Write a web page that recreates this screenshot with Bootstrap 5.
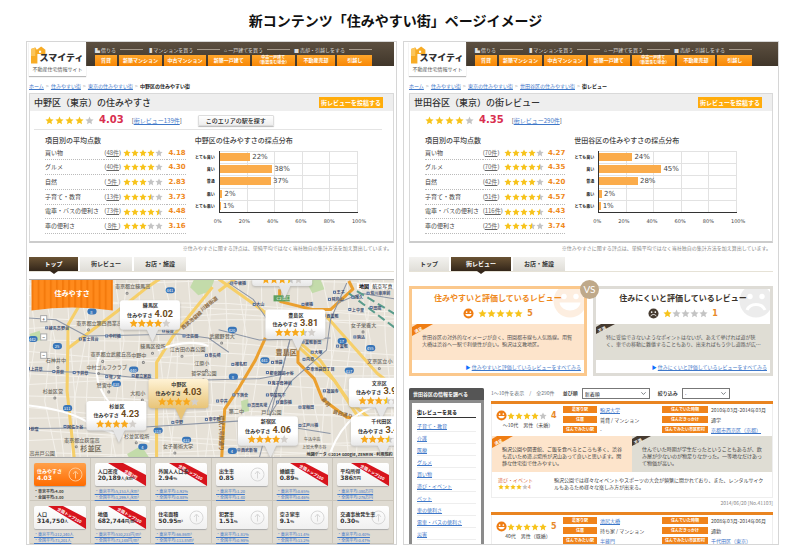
<!DOCTYPE html>
<html lang="ja">
<head>
<meta charset="utf-8">
<meta name="viewport" content="width=device-width, initial-scale=1">
<title>新コンテンツ「住みやすい街」ページイメージ</title>
<link href="https://cdn.jsdelivr.net/npm/bootstrap@5.3.0/dist/css/bootstrap.min.css" rel="stylesheet">
<style>
:root{--jp:"Noto Sans CJK JP",sans-serif;--num:"DejaVu Sans","Noto Sans CJK JP",sans-serif;--orange:#ef8a1d;--lnk:#3f78c9}
body{font:5px/7px var(--jp);color:#444;background:#fff;height:100vh;min-height:300px;padding:0 25px 12px 26px}
a{color:var(--lnk)}
h1{font-size:14px;line-height:20px;font-weight:700;color:#111;margin:10px 0 11px;padding-right:14px}
h2,h3,h4,p,ul{margin:0}
svg{display:block;flex:none}
.pages{display:grid;grid-template-columns:371fr 376fr;gap:6px;min-height:0}
.shot{border:1px solid #d6d6d6;overflow:hidden;padding:0 2px 0 2px;min-height:0}
.shot.rv{padding:0 5px}
.top-bar{height:34px;background:linear-gradient(#5c4f40,#40362a 24px,#fff 24px)}
.rv .top-bar{margin-right:-5px}
.brand-box{width:57px;background:#fff;box-shadow:0 1px 1px #bbb;color:#555;text-align:center}
.logo-word{font-size:9px;line-height:10px;font-weight:900;margin:7px 0 0 -8px;color:#333}
.gnav{height:24px;padding:2px 0 1px 9px;max-width:286px}
.gnav-cap{color:#ddd;height:11px;line-height:10px}
.gnav-cap i{height:1px;background:#a59a8c;flex:1}
.gnav-row{display:grid;grid-template-columns:21fr 41fr 40fr 40fr 41fr 37fr 33fr;gap:2px}
.gnav-btn{background:linear-gradient(#ffa62b,#f88705);color:#fff;font-weight:700;height:11px;line-height:10px;text-decoration:none;text-align:center;white-space:nowrap}
.gnav-btn.two{font-size:4px;line-height:5px}
.gnav-btn:hover{color:#fff}
.crumbs{padding:6px 0 4px;white-space:nowrap}
.crumbs span{color:#999;margin:0 1px}
.crumbs b{color:#222}
.summary{border:1px solid #d9d9d9;border-bottom:2px solid #ccc}
.sum-title{background:#eee;height:17px;padding:0 10px 0 4px}
.sum-title h2{font-size:9px;line-height:16px;font-weight:500;color:#333}
.post-btn{background:#ffac0c;color:#fff;border:0;font-size:6px;line-height:11px;font-weight:700;padding:0 2px}
.rate-row{height:19px;margin:0 11px 0 4px;padding-left:11px;border-bottom:1px solid #e4e4e4;font-size:6px}
.rv .rate-row{border-color:transparent}
.big-num{font:bold 10px/12px var(--num);color:#d92f4f}
.area-btn{border:1px solid #ddd;border-radius:1px;background:linear-gradient(#fff,#eee);box-shadow:0 1px 1px #bbb;font-size:6px;line-height:9px;padding:0 7px;color:#222;font-weight:500}
.sum-grid{display:grid;grid-template-columns:142fr 189fr;gap:9px;padding:4px 11px 7px 15px}
.sum-grid h3{font-size:7px;line-height:12px;font-weight:500;white-space:nowrap}
.scores{width:100%;height:88px;font-size:6px;line-height:8px;white-space:nowrap}
.scores td,.scores th{padding:0;border-bottom:1px dotted #bbb;vertical-align:middle;font-weight:400}
.scores a{color:#666}
.scores .val{font:bold 7px/8px var(--num);color:var(--orange);text-align:right}
.bars{display:grid;grid-template-columns:24px 141fr 24fr;margin-top:5px}
.bars-l{display:grid;grid-template-rows:repeat(5,1fr);font-size:4px;font-weight:700;text-align:right;padding-right:4px;align-items:center;white-space:nowrap;color:#222}
.bars-p{display:grid;grid-template-rows:repeat(5,1fr);height:62px;border-left:1px solid #333;border-bottom:1px solid #333;background:repeating-linear-gradient(90deg,transparent 0 calc(20% - 1px),#e2e2e2 calc(20% - 1px) 20%),repeating-linear-gradient(#e2e2e2 0 1px,transparent 1px 20%)}
.bars-p div{display:flex;align-items:center;gap:2px;font:7px/8px var(--num);color:#444}
.bars-p i{height:8px;background:#fbac4b}
.ticks{grid-column:2;display:flex;justify-content:space-between;font:5px/8px var(--num);margin:4px -8px 0 -5px}
.note{text-align:right;color:#888;line-height:10px;padding-right:2px;white-space:nowrap}
.tabs{height:15px;margin-top:4px;border-bottom:1px solid #e6e2d6;gap:2px}
.tabs a{width:52px;height:14px;line-height:13px;font-size:6px;font-weight:700;text-align:center;text-decoration:none;color:#333;background:linear-gradient(#f3f2ef,#e0ded8)}
.tabs a:first-child{width:49px}
.rv .tabs a:first-child{width:40px}
.rv .tabs a:nth-child(2){width:60px}
.tabs .on{color:#fff;background:linear-gradient(#6a5334,#33261a);position:relative}
.tabs .on::after{content:"";position:absolute;left:calc(50% - 4px);top:14px;border:4px solid transparent;border-top:3px solid #33261a;border-bottom:0}
.map{margin-top:7px;flex:1 1 0;min-height:0}
.map svg{width:100%;height:100%}
.stats{display:grid;grid-template-columns:repeat(6,1fr);background:#dfdbd2;padding-left:1px}
.cell{padding:5px 4px 0 4px;height:43px;border-right:1px solid #cbc6bb;border-bottom:1px solid #cbc6bb;white-space:nowrap;font-size:4px;line-height:6px}
.tile{height:23px;background:linear-gradient(#fff,#f0f0f0);border-radius:2px;box-shadow:0 1px 1px #aaa;position:relative;padding:4px 0 0 3px;font-weight:700;font-size:5px;line-height:7px;color:#333;margin-bottom:2px}
.tile b{font:bold 6px/7px var(--num)}
.tile small{font-size:4px}
.tile svg{position:absolute;right:0;top:0}
.tile svg.arr{right:3px;top:4px}
.tile.hot{background:linear-gradient(#ffa04a,#ff6c00);color:#fff}
.versus{display:grid;grid-template-columns:178fr 180fr;gap:6px;margin:14px 0 12px;position:relative}
.vs{position:absolute;left:calc(50% - 11px);top:-6px;width:19px;height:19px;border-radius:50%;background:#bfa98a;color:#fff;font:10px/19px Lato,sans-serif;text-align:center}
.op{border:3px solid #fbc88c;color:#555;min-width:0}
.op.bad{border-color:#dedcd6}
.op-head{height:35px;position:relative;overflow:hidden}
.op-head h3{font-size:8px;line-height:12px;font-weight:700;color:var(--orange);text-align:center;padding-top:3px;position:relative;white-space:nowrap}
.bad .op-head h3{color:#3b332a}
.ghost{position:absolute;right:-4px;top:-6px}
.five{font:bold 8px/10px var(--num);color:#e8892a}
.op-text{background:#fde4cb;height:36px;padding:9px 9px 0 10px;position:relative}
.bad .op-text,.pm .minus{background:#dfddd4}
.flag{position:absolute;left:0;top:0}
.op-foot{text-align:right;line-height:13px;padding-right:3px;height:13px}
.side{width:75px;background:#8b8b8b;border-radius:2px 2px 0 0;flex:none;padding:0 3px}
.side h3{background:#555;color:#fff;font-size:5px;line-height:12px;font-weight:700;margin:0 -3px 3px;padding-left:4px;border-radius:2px 2px 0 0}
.side-in{background:#fff;padding:4px 5px 300px}
.side-in h4{font-size:5px;line-height:10px;font-weight:700;color:#111;border-bottom:1px solid #333;margin-bottom:2px}
.side-in li{height:12px;line-height:11px;border-bottom:1px solid #eee}
.rev-list{min-width:0;padding-left:7px}
.list-tools{height:13px;line-height:10px;white-space:nowrap}
.list-tools .form-select{font:5px/8px var(--jp);height:11px;padding:0 8px 0 2px;border:1px solid #777;border-radius:0;background-size:5px;background-position:right 3px center}
.list-tools .sel-sort{width:68px}
.list-tools .sel-narrow{width:48px}
.rev{border-top:3px solid #e98420;margin-bottom:1px}
.rev-box{border:1px solid #eee;border-top:0}
.rev-top{display:grid;grid-template-columns:64px 34px 59fr 46px 61fr;column-gap:3px;padding:2px 0 0 4px;height:32px}
.rev-top .who{grid-row:1/4}
.rev-top>*{white-space:nowrap;min-width:0}
.tag{background:#f0831a;color:#fff;font-weight:700;font-size:4px;text-align:center;line-height:7px;height:7px}
.pm{display:grid;grid-template-columns:1fr 1fr}
.pm>div{background:#fde4cb;height:36px;padding:9px 8px 0 10px;position:relative}
.extra{display:grid;grid-template-columns:53px 1fr;gap:3px;padding:4px 8px 7px 6px}
.theme{color:#dd6b3c}
.date{text-align:right;color:#888;line-height:10px}
</style>
</head>
<body class="d-flex flex-column">
<svg width="0" height="0" class="position-absolute" aria-hidden="true">
<defs>
<linearGradient id="half"><stop offset=".5" stop-color="#f7c31a"/><stop offset=".5" stop-color="#c4c4c4"/></linearGradient>
<linearGradient id="tan" x2="0" y2="1"><stop offset="0" stop-color="#fff3d6"/><stop offset="1" stop-color="#e8c478"/></linearGradient>
<linearGradient id="wht" x2="0" y2="1"><stop offset=".6" stop-color="#fff"/><stop offset="1" stop-color="#e6e6e6"/></linearGradient>
<symbol id="star" viewBox="0 0 20 20"><path d="M10 1l2.700 6 6.300.700-4.700 4.300 1.300 6.500L10 15.200 4.400 18.500l1.300-6.500L1 7.700 7.300 7z"/></symbol>
<symbol id="smile" viewBox="0 0 24 24"><circle cx="12" cy="12" r="11"/><circle cx="8" cy="9" r="1.800" fill="#fff"/><circle cx="16" cy="9" r="1.800" fill="#fff"/><path d="M5 13h14c-1 7-13 7-14 0z" fill="#fff"/></symbol>
<symbol id="frown" viewBox="0 0 24 24"><circle cx="12" cy="12" r="11"/><circle cx="8" cy="9" r="1.800" fill="#fff"/><circle cx="16" cy="9" r="1.800" fill="#fff"/><path d="M6 18c2-5 10-5 12 0" fill="none" stroke="#fff" stroke-width="2"/></symbol>
<symbol id="logo" viewBox="0 0 30 34"><path d="M0 5l8-3 3 4 8-6 8 6v8H12v18H0z" fill="#f8ac25"/><path d="M0 5l8-3v16H0z" fill="#fbc65c"/><path d="M15 8h4v4h-4z" fill="#fff"/></symbol>
<pattern id="stripe" width="6" height="8" patternUnits="userSpaceOnUse"><path d="M0 0h6v8H0z" fill="#ff8a1c"/><path d="M0 0h2v8H0z" fill="#f47a0c"/></pattern>
</defs>
</svg>

<h1 class="text-center">新コンテンツ「住みやすい街」ページイメージ</h1>
<main class="pages flex-fill">
  <section class="shot d-flex flex-column">
    <div data-part="header"></div>
    <nav class="crumbs" aria-label="パンくず"><a href="#">ホーム</a> <span>&gt;</span> <a href="#">住みやすい街</a> <span>&gt;</span> <a href="#">東京の住みやすい街</a> <span>&gt;</span> <b>中野区の住みやすい街</b></nav>
    <div data-part="summary" data-key="nakano"></div>
    <nav class="tabs d-flex"><a class="on" href="#">トップ</a><a href="#">街レビュー</a><a href="#">お店・施設</a></nav>
    <div class="map"></div>
    <div class="stats"></div>
  </section>

  <section class="shot rv">
    <div data-part="header"></div>
    <nav class="crumbs" aria-label="パンくず"><a href="#">ホーム</a> <span>&gt;</span> <a href="#">住みやすい街</a> <span>&gt;</span> <a href="#">東京の住みやすい街</a> <span>&gt;</span> <a href="#">世田谷区の住みやすい街</a> <span>&gt;</span> <b>街レビュー</b></nav>
    <div data-part="summary" data-key="setagaya"></div>
    <nav class="tabs d-flex"><a href="#">トップ</a><a class="on" href="#">街レビュー</a><a href="#">お店・施設</a></nav>

    <div class="versus">
      <article class="op">
        <div class="op-head"><svg class="ghost" width="36" height="36" fill="#fdeee0"><use href="#smile"/></svg><h3>住みやすいと評価しているレビュー</h3>
          <div class="d-flex justify-content-center align-items-center gap-1 position-relative mt-1"><svg width="11" height="11" fill="#ef7d13"><use href="#smile"/></svg><span data-stars="5" data-size="9"></span><span class="five">5</span></div></div>
        <div class="op-text"><svg class="flag" width="22" height="12"><path d="M0 12V3L5 0h16z" fill="#ef7d13"/><text x="3" y="9" transform="rotate(-27 4 8)" font-size="4" font-weight="700" fill="#fff">満足</text></svg>世田谷区の対外的なイメージが良く、田園都市線も人気路線。用賀大橋は渋谷へ一駅で利便性が良い。駒沢は文教地区。</div>
        <div class="op-foot"><span class="text-primary">▶</span> <a href="#">住みやすいと評価しているレビューをすべてみる</a></div>
      </article>
      <article class="op bad">
        <div class="op-head"><svg class="ghost" width="36" height="36" fill="#ececec"><use href="#frown"/></svg><h3>住みにくいと評価しているレビュー</h3>
          <div class="d-flex justify-content-center align-items-center gap-1 position-relative mt-1"><svg width="11" height="11" fill="#463b30"><use href="#frown"/></svg><span data-stars="1" data-size="9"></span><span class="five">1</span></div></div>
        <div class="op-text"><svg class="flag" width="20" height="12"><path d="M0 10V3L5 0h14z" fill="#463b30"/><text x="3" y="8" transform="rotate(-27 4 8)" font-size="4" font-weight="700" fill="#fff">不満</text></svg>特に妥協できないようなポイントはないが、あえて挙げれば道が狭く、車での移動に難儀することもあり、出来ればもう少し道路が広…</div>
        <div class="op-foot"><span class="text-primary">▶</span> <a href="#">住みにくいと評価しているレビューをすべてみる</a></div>
      </article>
      <div class="vs">VS</div>
    </div>

    <div class="d-flex">
      <aside class="side"><h3>世田谷区の情報を調べる</h3><div class="side-in"><h4>街レビューを見る</h4>
        <ul class="list-unstyled"><li><a href="#">子育て・教育</a></li><li><a href="#">介護</a></li><li><a href="#">医療</a></li><li><a href="#">グルメ</a></li><li><a href="#">買い物</a></li><li><a href="#">遊び・イベント</a></li><li><a href="#">ペット</a></li><li><a href="#">車の便利さ</a></li><li><a href="#">電車・バスの便利さ</a></li><li><a href="#">災害</a></li><li><a href="#">治安</a></li></ul></div></aside>
      <div class="flex-fill rev-list">
        <div class="list-tools d-flex align-items-start"><span class="text-secondary me-1">1〜10件を表示　/　全290件</span>
          <label class="fw-bold mx-1" for="sort">並び順</label><select class="form-select sel-sort me-2" id="sort"><option>新着順</option></select>
          <label class="fw-bold me-1" for="narrow">絞り込み</label><select class="form-select sel-narrow" id="narrow"><option>-</option></select></div>
        <article class="rev"><div class="rev-box">
          <div class="rev-top"><div class="who" data-who="4">〜10代　男性（未婚）</div>
            <span class="tag">最寄り駅</span><a href="#">駒沢大学</a><span class="tag">住んでいた時期</span><span>2010年03月-2014年03月</span>
            <span class="tag">住居</span><span>賃貸 / マンション</span><span class="tag">住んだきっかけ</span><span>通学</span>
            <span class="tag">住んでみたい駅</span><span>-</span><span class="tag">住んでみたい市区町村</span><a href="#">京都市西京区（京都）</a></div>
          <div class="pm"><div><svg class="flag" width="22" height="12"><path d="M0 12V3L5 0h16z" fill="#ef7d13"/><text x="3" y="9" transform="rotate(-27 4 8)" font-size="4" font-weight="700" fill="#fff">満足</text></svg>駒沢公園や図書館、ご飯を食べるところも多く、渋谷も近いため遊ぶ場所が沢山あって良いと思います。閑静な住宅街で住みやすい。</div>
            <div class="minus"><svg class="flag" width="20" height="12"><path d="M0 10V3L5 0h14z" fill="#463b30"/><text x="3" y="8" transform="rotate(-27 4 8)" font-size="4" font-weight="700" fill="#fff">不満</text></svg>住んでいた時期が学生だったということもあるが、飲み屋が少ないのが物足りなかった。一等地なだけあって物価が高い。</div></div>
          <div class="extra"><div><span class="theme">遊び・イベント</span><div class="d-flex align-items-center"><span data-stars="4" data-size="6"></span><span class="theme">4</span></div></div>
            <div>駒沢公園では様々なイベントやスポーツの大会が頻繁に開かれており、また、レンタルサイクルもあるため様々な楽しみ方が出来る。</div></div></div>
          <div class="date">2014/06/20 [No.41103]</div></article>
        <article class="rev mt-1"><div class="rev-box">
          <div class="rev-top"><div class="who" data-who="5">40代　男性（既婚）</div>
            <span class="tag">最寄り駅</span><a href="#">池尻大橋</a><span class="tag">住んでいた時期</span><span>2008年03月-2014年06月</span>
            <span class="tag">住居</span><span>持ち家 / マンション</span><span class="tag">住んだきっかけ</span><span>通勤</span>
            <span class="tag">住んでみたい駅</span><a href="#">半蔵門</a><span class="tag">住んでみたい市区町村</span><a href="#">千代田区（東京）</a></div></div></article>
      </div>
    </div>
  </section>
</main>

<script>
const $$ = s => document.querySelectorAll(s);
const fill = (v, i) => v >= i + .8 ? '#f7c31a' : v >= i + .35 ? 'url(#half)' : '#c4c4c4';
const stars = (v, s, gap = 0) => '<span class="d-inline-flex align-middle">' + [0,1,2,3,4].map(i =>
  `<svg width="${s + gap}" height="${s}" fill="${fill(v, i)}"><use href="#star" width="${s}" height="${s}"/></svg>`).join('') + '</span>';

const header = `<header class="top-bar d-flex">
 <div class="brand-box"><div class="d-flex justify-content-center pt-1"><svg width="16" height="19"><use href="#logo"/></svg>
 <b class="logo-word">スマイティ</b></div><div>不動産住宅情報サイト</div></div>
 <div class="gnav flex-fill"><div class="gnav-cap d-flex align-items-center gap-1"><span>▙ 借りる</span><i></i><span>▐ マンションを買う</span><i></i><span>⌂ 一戸建てを買う</span><i></i><span>■ 売却・引越しをする</span><i></i></div>
 <nav class="gnav-row">${['賃貸','新築マンション','中古マンション','新築一戸建て','中古一戸建て<br>（新築含む場合）','不動産売却','引越し'].map((t,i)=>`<a class="gnav-btn${i==4?' two':''}" href="#">${t}</a>`).join('')}</nav></div></header>`;
$$('[data-part=header]').forEach(e => e.outerHTML = header);

const areas = {
  nakano: {t:'中野区（東京）の住みやすさ', v:'4.03', n:139, btn:true, h:'中野区の住みやすさの採点分布',
    s:[['買い物','48件',4.18],['グルメ','40件',4.30],['自然',' 5件 ',2.83],['子育て・教育','13件',3.73],['電車・バスの便利さ','73件',4.48],['車の便利さ',' 8件 ',3.16]], b:[22,38,37,2,1]},
  setagaya: {t:'世田谷区（東京）の街レビュー', v:'4.35', n:290, h:'世田谷区の住みやすさの採点分布',
    s:[['買い物','70件',4.27],['グルメ','70件',4.35],['自然','42件',4.20],['子育て・教育','51件',4.57],['電車・バスの便利さ','116件',4.43],['車の便利さ','25件',3.74]], b:[24,45,28,2,1]}
};
$$('[data-part=summary]').forEach(e => {
  const a = areas[e.dataset.key];
  e.outerHTML = `<div class="summary"><div class="sum-title d-flex justify-content-between align-items-center"><h2>${a.t}</h2><button class="post-btn" type="button">街レビューを投稿する</button></div>
  <div class="rate-row d-flex align-items-center">${stars(4,9,1)}<span class="big-num ms-1 me-2">${a.v}</span><span>[<a href="#">街レビュー${a.n}件</a>]</span>${a.btn?'<button class="area-btn ms-3" type="button">このエリアの駅を探す</button>':''}</div>
  <div class="sum-grid"><div><h3>項目別の平均点数</h3><table class="scores">${a.s.map(r=>`<tr><th scope="row">${r[0]}</th><td>(<a href="#">${r[1]}</a>)</td><td>${stars(r[2],8)}</td><td class="val">${r[2].toFixed(2)}</td></tr>`).join('')}</table></div>
  <div><h3>${a.h}</h3><div class="bars"><div class="bars-l">${['とても良い','良い','普通','悪い','とても悪い'].map(t=>`<span>${t}</span>`).join('')}</div>
  <div class="bars-p">${a.b.map(n=>`<div><i style="width:${n}%"></i>${n}%</div>`).join('')}</div><div class="ticks">${[0,20,40,60,80,100].map(n=>`<span>${n}%</span>`).join('')}</div></div></div></div></div>
  <p class="note">※住みやすさに関する評点は、単純平均ではなく当社独自の集計方法を加え算出しています。</p>`;
});
$$('[data-stars]').forEach(e => e.outerHTML = stars(+e.dataset.stars, +e.dataset.size));
$$('[data-who]').forEach(e => e.innerHTML = `<div class="d-flex align-items-center mt-1"><svg width="11" height="11" fill="#ef7d13"><use href="#smile"/></svg>${stars(+e.dataset.who,8)}<span class="five ms-1">${e.dataset.who}</span></div><div class="text-center">${e.textContent}</div>`);

/* Map of the wards around Nakano */
const road = (d, c, w) => `<path d="${d}" fill="none" stroke="${c}" stroke-width="${w}" stroke-linejoin="round"/>`;
let m = '<rect width="366" height="176" fill="#e6e1d7"/>';
for (let i = 0; i < 34; i++) m += road(`M${i*12-20} 0l${(i*7)%23-8} 60l${(i*11)%19-12} 60l${(i*5)%21-8} 56`, '#f4f1eb', 1);
for (let i = 0; i < 18; i++) m += road(`M0 ${i*11-6}l90 ${(i*7)%17-7}l110 ${(i*5)%19-9}l166 ${(i*11)%23-8}`, '#f4f1eb', 1);
m += '<path d="M166 0h20l-4 12-12 4-8-8zM276 2l14-2 4 10-12 4zM212 120l7-2 1 12-7 1zM100 172l14-8 8 12h-20zM4 54l10-3 3 9-10 2z" fill="#c3dbaa"/>';
[['M53 26L42 45 41 110 48 176'],['M42 68L90 32 120 8 132 0'],['M184 8L146 55 129 82V176'],['M190 0L232 30 290 80 318 120 366 160'],['M290 30L346 93 366 108'],['M190 12L206 0'],['M268 66L304 100 330 140']].forEach(r => m += road(r[0], '#f6cf69', 3));
['M318 2L322 10 300 30 282 30 250 22M250 22V10','M236 58L226 80 210 107 196 128 193 176','M268 62V82L284 98 292 118 316 136 366 142'].forEach(d => m += road(d,'#eba02f',3));
['M0 38L30 40 60 56 110 55 150 54 180 58 200 72','M0 90L60 92 110 97 145 100 230 98 262 92','M0 147L110 146 220 139 300 152','M200 4L224 20 238 40 260 60 250 100 238 130','M316 4L300 40 296 70 262 100 240 134','M366 20L330 14 306 24','M190 50L230 60 300 58','M260 60L230 176'].forEach(d => m += road(d,'#8c95a5',1));
['M318 14L366 50','M326 12L366 36'].forEach(d => m += road(d,'#5a9c8c" stroke-dasharray="8 4',2));
['M0 124Q40 128 60 140T122 160','M75 70Q60 100 90 130','M300 170Q320 120 366 124','M130 70Q160 58 180 66'].forEach(d => m += road(d,'#fff',2));
const T=(x,y,t,c='#3d4f73',s=5,w=700)=>`<text x="${x}" y="${y}" font-size="${s}" font-weight="${w}" fill="${c}">${t}</text>`;
[[23,50,'練馬高野台'],[56,61,'富士見台'],[82,58,'中村橋'],[138,53,'桜台'],[158,58,'江古田'],[5,90,'上井草'],[30,93,'井荻'],[50,94,'下井草'],[82,98,'鷺ノ宮'],[108,97,'都立家政'],[5,149,'荻窪'],[41,147,'阿佐ケ谷'],[147,143,'中野'],[180,140,'東中野'],[205,6,'中板橋'],[227,27,'大山'],[306,15,'王子'],[301,22,'飛鳥山'],[324,20,'尾久'],[339,16,'荒川車庫前'],[321,32,'上中里'],[342,30,'田端'],[275,27,'板橋'],[296,38,'西巣鴨'],[275,64,'巣鴨新田'],[284,74,'大塚'],[309,68,'巣鴨'],[326,59,'駒込'],[276,81,'向原'],[245,84,'池袋'],[240,94,'都電雑司ヶ谷'],[280,90,'東池袋四丁目'],[242,104,'鬼子母神前'],[240,116,'学習院下'],[296,112,'護国寺'],[206,86,'椎名町'],[207,116,'下落合'],[191,122,'中井'],[222,126,'高田馬場'],[250,123,'面影橋'],[272,128,'早稲田'],[180,77,'東長崎'],[212,170,'西武新宿'],[272,146,'江戸川橋']].forEach(a=>m+=T(a[0],a[1],a[2],'#3d4f73',4)+`<rect x="${a[0]-3}" y="${a[1]-3}" width="2" height="2" fill="#fff" stroke="#54709c"/>`);
[[88,9,'東京都立練馬高'],[50,45,'東京都立第四商業高'],[113,68,'練馬区役所'],[142,71,'江古田の森公園'],[64,76,'東京都立武蔵丘高'],[104,77,'中野中'],[60,88,'中村ゴルフクラブ'],[20,82,'石神井中'],[17,112,'杉並区営'],[70,106,'鷺宮中'],[103,114,'大和小'],[166,85,'江原小'],[163,94,'哲学堂公園'],[38,160,'東京都立荻窪高'],[97,156,'杉並区役所'],[135,166,'女子美術大学'],[4,173,'高井戸公園'],[181,58,'武蔵野音大'],[320,47,'女子栄養大'],[336,83,'文京区立小'],[200,132,'第二中'],[232,133,'戸山公園'],[274,159,'牛込中高'],[272,167,'上智大学市谷']].forEach(a=>m+=T(a[0],a[1],a[2],'#6d6a62',a[2]=='牛込中高'||a[2]=='上智大学市谷'?4:5,500)+`<circle cx="${a[0]+12}" cy="${a[1]+5}" r="1" fill="none" stroke="#888"/>`);
m += T(246,75,'豊島区','#8b6a42',7)+T(54,169,'杉並区','#7a7262',7);
m += '<g fill="#8b6a42" font-size="5" font-weight="700"><text transform="translate(155 50) rotate(-40)">西武池袋線</text><text transform="translate(174 32) rotate(-38)">川越街道</text><text transform="translate(291 118) rotate(52)">音羽</text><text transform="translate(302 132) rotate(15)">目白通り</text><text transform="translate(191 134) rotate(90)">環状六号線通り</text></g>';
[[142,11,'441'],[65,32,'8'],[7,59,'442'],[31,66,'25'],[106,89,'440'],[89,103,'438'],[41,127,'311'],[130,149,'318'],[158,158,'433'],[115,165,'4'],[203,50,'420'],[235,80,'441'],[204,96,'8'],[311,61,'17'],[339,68,'455'],[318,90,'437'],[203,169,'4']].forEach(a=>m+=`<rect x="${a[0]-4}" y="${a[1]-3}" width="9" height="6" rx="3" fill="#3875b8"/><text x="${a[0]}" y="${a[1]+2}" text-anchor="middle" font-size="4" fill="#fff">${a[2]}</text>`);
m += '<rect x="244" y="16" width="16" height="6" fill="#5fa060"/><text x="247" y="21" font-size="4" fill="#fff">C2 出口</text>';
['+','−','−'].forEach((t,i)=>m+=`<rect x="15" y="${36+i*18}" width="6" height="6" fill="#fff" stroke="#aaa"/><text x="18" y="${41+i*18}" text-anchor="middle" font-size="5">${t}</text>`);
m += '<path d="M6 1H86V31Q46 25 6 31z" fill="url(#stripe)"/><text x="46" y="17" text-anchor="middle" font-size="7" font-weight="700" fill="#fff">住みやすさ</text>';
const pin=(x,y,n,v,hot)=>{const f=hot?'url(#tan)':'url(#wht)',g=hot?'#e8c478':'#e6e6e6';
  return `<g filter="drop-shadow(0 1px 1px #8888)"><path d="M${x+26} ${y+28}h12l-6 13z" fill="${g}"/><rect x="${x}" y="${y}" width="59" height="29" rx="3" fill="${f}"/></g>`+
  (y<0?'':`<text x="${x+30}" y="${y+7}" text-anchor="middle" font-size="5" font-weight="700" fill="#333">${n}</text><text x="${x+7}" y="${y+16}" font-size="5" font-weight="700" fill="#333">住みやすさ</text>
  <text x="${x+34}" y="${y+16}" font-size="9" font-weight="700" fill="#6b4a20" font-family="Roboto">${v}</text>`)+[0,1,2,3,4].map(i=>`<use href="#star" x="${x+9+i*8}" y="${y+18}" width="9" height="9" fill="${+v>=i+.95?'#f8a81c':+v>=i+.4?'url(#half)':'#d3cfcb'}"/>`).join('')};
m += pin(223,-22,'',3.6)+pin(93,21,'練馬区','4.02')+pin(236,30,'豊島区','3.81')+pin(318,97,'文京区','3.9')+pin(320,135,'千代田区','3.4')+pin(209,135,'新宿区','4.06')+pin(60,120,'杉並区','4.23')+pin(121,98,'中野区','4.03',1);
m += '<rect x="326" y="4" width="13" height="6" fill="#fff"/><rect x="340" y="4" width="22" height="6" fill="#fff"/><text x="328" y="9" font-size="5" font-weight="700">地図</text><text x="341" y="9" font-size="5">航空写真</text><text x="361" y="174" text-anchor="end" font-size="4" font-weight="700" fill="#333">地図データ ©2014 Google, ZENRIN - 利用規約</text>';
document.querySelector('.map').innerHTML = `<svg viewBox="0 0 366 176" preserveAspectRatio="xMidYMid slice" role="img" aria-label="中野区周辺の地図">${m}<rect x=".5" y=".5" width="365" height="175" fill="none" stroke="#aaa"/></svg>`;

const st=[['住みやすさ','4.03','','4.00','3.00'],['人口密度','20,189','人/km²','5,153人/km²','1,299人/km²','全国2位'],['外国人人口率','2.94','%','1.92%','0.88%','全国トップ100'],['出生率','0.85','','1.20','1.40'],['婚姻率','0.89','%','0.65%','0.46%','全国トップ100'],['平均所得','386','万円','380万円','276万円','全国トップ100'],
['人口','314,750','人','212,240人','73,201人','全国トップ100'],['地価','682,744','円/m²','530,233円/m²','73,148円/m²','全国トップ100'],['住宅面積','50.95','m²','66.86m²','113.85m²'],['犯罪率','1.51','%','1.81%','0.98%'],['空き家率','9.1','%','11.4%','13.2%'],['交通事故発生率','0.30','%','0.40%','0.47%']];
document.querySelector('.stats').innerHTML = st.map((s,i)=>{
  const c=i?'#d8d8d8':'#ffc893';
  const deco=s[5]?`<svg width="38" height="23"><path d="M0 0h15l23 12v11z" fill="#d7141d"/><text transform="translate(${s[5].length>5?9:16} ${s[5].length>5?4:9}) rotate(30)" font-size="4" fill="#fff">${s[5]}</text></svg>`
   :`<svg class="arr" width="15" height="15" fill="none" stroke="${c}"><circle cx="7.500" cy="7.500" r="6.500"/><path d="M7.500 11.500v-7M5 7l2.500-3L10 7"/></svg>`;
  const l=t=>i?`<a href="#">・${t}</a>`:`<b>・${t}</b>`;
  return `<div class="cell"><div class="tile${i?'':' hot'}">${deco}<div class="position-relative">${s[0]}</div><div class="position-relative"><b>${s[1]}</b><small>${s[2]}</small></div></div>${l('東京平均:'+s[3])}<br>${l('全国平均:'+s[4])}</div>`}).join('');
</script>
</body>
</html>
